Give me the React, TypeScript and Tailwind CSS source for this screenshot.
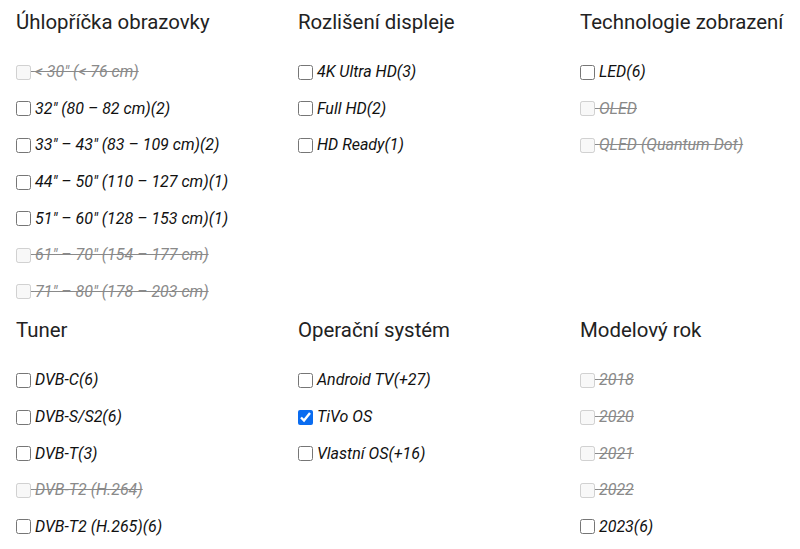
import React from "react";

type Item = { label: string; count?: string; disabled?: boolean; checked?: boolean };
type Group = { title: string; items: Item[] };

const row1: Group[] = [
  {
    title: "Úhlopříčka obrazovky",
    items: [
      { label: "< 30\" (< 76 cm)", disabled: true },
      { label: "32\" (80 – 82 cm)", count: "(2)" },
      { label: "33\" – 43\" (83 – 109 cm)", count: "(2)" },
      { label: "44\" – 50\" (110 – 127 cm)", count: "(1)" },
      { label: "51\" – 60\" (128 – 153 cm)", count: "(1)" },
      { label: "61\" – 70\" (154 – 177 cm)", disabled: true },
      { label: "71\" – 80\" (178 – 203 cm)", disabled: true },
    ],
  },
  {
    title: "Rozlišení displeje",
    items: [
      { label: "4K Ultra HD", count: "(3)" },
      { label: "Full HD", count: "(2)" },
      { label: "HD Ready", count: "(1)" },
    ],
  },
  {
    title: "Technologie zobrazení",
    items: [
      { label: "LED", count: "(6)" },
      { label: "OLED", disabled: true },
      { label: "QLED (Quantum Dot)", disabled: true },
    ],
  },
];

const row2: Group[] = [
  {
    title: "Tuner",
    items: [
      { label: "DVB-C", count: "(6)" },
      { label: "DVB-S/S2", count: "(6)" },
      { label: "DVB-T", count: "(3)" },
      { label: "DVB-T2 (H.264)", disabled: true },
      { label: "DVB-T2 (H.265)", count: "(6)" },
    ],
  },
  {
    title: "Operační systém",
    items: [
      { label: "Android TV", count: "(+27)" },
      { label: "TiVo OS", checked: true },
      { label: "Vlastní OS", count: "(+16)" },
    ],
  },
  {
    title: "Modelový rok",
    items: [
      { label: "2018", disabled: true },
      { label: "2020", disabled: true },
      { label: "2021", disabled: true },
      { label: "2022", disabled: true },
      { label: "2023", count: "(6)" },
    ],
  },
];

function GroupBlock({ g }: { g: Group }) {
  return (
    <div className="flex flex-col">
      <h3 className="text-[20.4px] leading-[24px] text-[#222] font-normal whitespace-nowrap mb-[20px]">{g.title}</h3>
      <div className="flex flex-col">
        {g.items.map((it) => (
          <label
            key={it.label}
            className={
              "flex items-center h-[36.6px] whitespace-nowrap italic text-[16px] " +
              (it.disabled ? "text-[#8a8a8a]" : "text-[#111]")
            }
          >
            <input
              type="checkbox"
              disabled={it.disabled}
              defaultChecked={it.checked}
              className="w-[15px] h-[15px] m-0 accent-[#0a6cf0]"
            />
            <span className={it.disabled ? "line-through" : ""}>
              {"\u00a0"}
              {it.label}
              {it.count ?? ""}
            </span>
          </label>
        ))}
      </div>
    </div>
  );
}

export default function App() {
  return (
    <div
      className="w-[800px] h-[549px] overflow-hidden bg-white pl-4 pt-[10px]"
      style={{ fontFamily: "Roboto, 'Noto Sans', sans-serif" }}
    >
      <div className="grid grid-cols-[266px_266px_266px] gap-x-4 gap-y-[8px]">
        {row1.map((g) => (
          <GroupBlock key={g.title} g={g} />
        ))}
        {row2.map((g) => (
          <GroupBlock key={g.title} g={g} />
        ))}
      </div>
    </div>
  );
}
